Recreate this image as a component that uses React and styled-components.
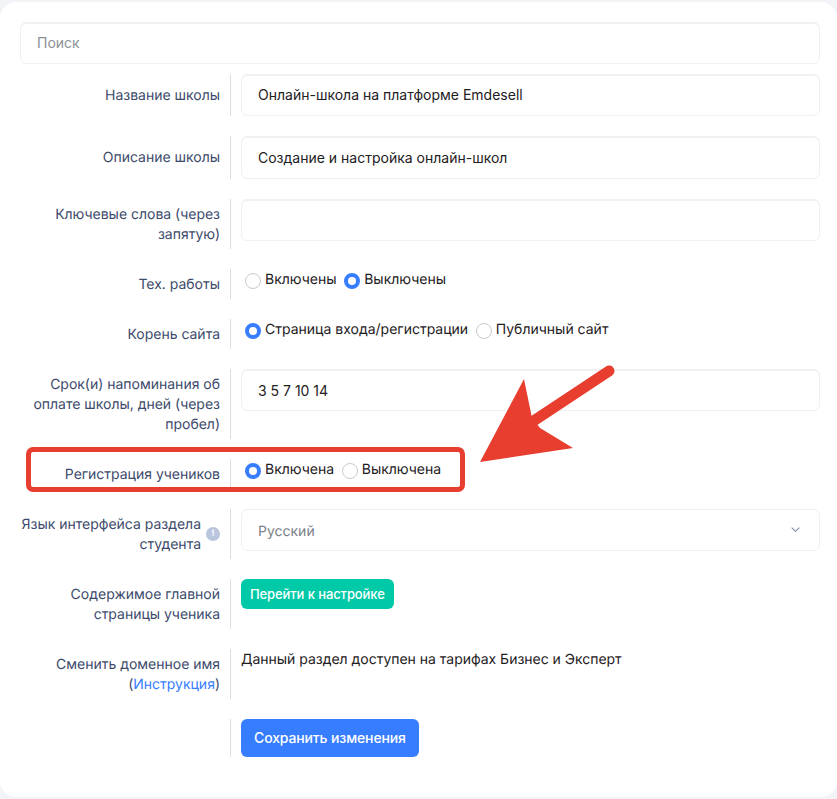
import React from "react";
import styled, { createGlobalStyle } from "styled-components";

const Global = createGlobalStyle`
  html, body { margin: 0; padding: 0; background: #f3f4f8; }
  body {
    font-family: Inter, "Liberation Sans", sans-serif;
    font-size: 14px;
    color: #1e2022;
    text-rendering: geometricPrecision;
  }
  * { box-sizing: border-box; }
`;

const Page = styled.div`
  position: relative;
  padding-top: 1.5px;
  height: 799px;
  overflow: hidden;
`;

const Card = styled.div`
  background: #fff;
  border-radius: 16px;
  padding: 20px 17px 40px 20px;
  display: flex;
  flex-direction: column;
  gap: 20px;
`;

const Search = styled.input`
  display: block;
  width: 100%;
  height: 42.4px;
  margin-bottom: -10px;
  padding: 0 16px;
  font: inherit;
  color: #1e2022;
  background: #fff;
  border: 1px solid #eff0f4;
  box-shadow: inset 0 1px 0 #f0f0f3;
  border-radius: 6px;
  outline: none;
  &::placeholder { color: #8c9095; opacity: 1; }
`;

const Row = styled.div`
  display: grid;
  grid-template-columns: 211px 1fr;
`;

const Label = styled.div`
  display: flex;
  align-items: center;
  justify-content: flex-end;
  gap: 5px;
  width: 211px;
  padding: 6px 10px 4px 0;
  border-right: 1px solid #dcdee2;
  text-align: right;
  line-height: 20px;
  letter-spacing: -0.012px;
  color: #3c4a6b;
`;

const LabelText = styled.div`
  flex: 0 1 auto;
`;

const Content = styled.div`
  padding-left: 10px;
  min-width: 0;
`;

const Field = styled.input`
  display: block;
  width: 100%;
  height: 42.4px;
  padding: ${(p) => (p.$nudge > 0 ? "1.5px" : "0")} 16px ${(p) => (p.$nudge < 0 ? "1.5px" : "0")};
  font: inherit;
  color: #1e2022;
  background: #fff;
  border: 1px solid #eff0f4;
  box-shadow: inset 0 1px 0 #f0f0f3;
  border-radius: 6px;
  outline: none;
`;

const SelectBox = styled.div`
  display: flex;
  align-items: center;
  justify-content: space-between;
  height: 42.4px;
  padding: 0 19px 0 16px;
  color: #7a8087;
  border: 1px solid #eff0f4;
  border-radius: 6px;
`;

const SelectValue = styled.span`
  padding-top: 3px;
`;

const Radios = styled.div`
  display: flex;
  align-items: flex-start;
  height: 30px;
  line-height: 20px;
`;

const RadioItem = styled.div`
  display: flex;
  align-items: flex-start;
  margin-right: 3.6px;
`;

const RadioDot = styled.span`
  flex: none;
  width: 16px;
  height: 16px;
  margin: 4px 4px 0 4px;
  border-radius: 50%;
  background: #fff;
  border: ${(p) => (p.$on ? "4px solid #377dff" : "1px solid #c9cbd0")};
`;

const RadioText = styled.span`
  padding-top: 1px;
`;

const Plain = styled.div`
  padding-top: 1px;
  line-height: 20px;
  letter-spacing: -0.02px;
  color: #1e2022;
`;

const Link = styled.a`
  color: #377dff;
  text-decoration: none;
`;

const InfoBadge = styled.span`
  flex: none;
  width: 14px;
  height: 14px;
  margin-top: -2px;
  border-radius: 50%;
  background: #bac5de;
  color: #fff;
  font-size: 9px;
  font-weight: 700;
  line-height: 14px;
  text-align: center;
`;

const GreenButton = styled.button`
  display: block;
  height: 30px;
  padding: 1px 9px 0;
  border: 0;
  border-radius: 6px;
  background: #00c9a7;
  color: #fff;
  font: 500 13px Inter, sans-serif;
  letter-spacing: -0.1px;
`;

const BlueButton = styled.button`
  display: block;
  height: 38px;
  padding: 0 13px;
  border: 0;
  border-radius: 6px;
  background: #377dff;
  color: #fff;
  font: 500 14px Inter, sans-serif;
  letter-spacing: -0.14px;
`;

const Highlight = styled.div`
  position: absolute;
  left: 26px;
  top: 447px;
  width: 439px;
  height: 45px;
  border: 5px solid #e83e30;
  border-radius: 7px;
  pointer-events: none;
`;

const ArrowSvg = styled.svg`
  position: absolute;
  left: 470px;
  top: 355px;
  pointer-events: none;
`;

const Radio = ({ on, children }) => (
  <RadioItem>
    <RadioDot $on={on} />
    <RadioText>{children}</RadioText>
  </RadioItem>
);

export default function App() {
  return (
    <Page>
      <Global />
      <Card>
        <Search placeholder="Поиск" readOnly />
        <Row>
          <Label>Название школы</Label>
          <Content><Field $nudge={-1} readOnly value="Онлайн-школа на платформе Emdesell" /></Content>
        </Row>
        <Row>
          <Label>Описание школы</Label>
          <Content><Field readOnly value="Создание и настройка онлайн-школ" /></Content>
        </Row>
        <Row>
          <Label>Ключевые слова (через запятую)</Label>
          <Content><Field readOnly value="" /></Content>
        </Row>
        <Row>
          <Label>Тех. работы</Label>
          <Content>
            <Radios>
              <Radio>Включены</Radio>
              <Radio on>Выключены</Radio>
            </Radios>
          </Content>
        </Row>
        <Row>
          <Label>Корень сайта</Label>
          <Content>
            <Radios>
              <Radio on>Страница входа/регистрации</Radio>
              <Radio>Публичный сайт</Radio>
            </Radios>
          </Content>
        </Row>
        <Row>
          <Label>Срок(и) напоминания об оплате школы, дней (через пробел)</Label>
          <Content><Field $nudge={1} readOnly value="3 5 7 10 14" /></Content>
        </Row>
        <Row>
          <Label>Регистрация учеников</Label>
          <Content>
            <Radios>
              <Radio on>Включена</Radio>
              <Radio>Выключена</Radio>
            </Radios>
          </Content>
        </Row>
        <Row>
          <Label>
            <LabelText>Язык интерфейса раздела студента</LabelText>
            <InfoBadge>!</InfoBadge>
          </Label>
          <Content>
            <SelectBox>
              <SelectValue>Русский</SelectValue>
              <svg width="9" height="5" viewBox="0 0 9 5" fill="none">
                <path d="M.7.7l3.8 3.6L8.3.7" stroke="#7d8ba8" strokeWidth="1.1" />
              </svg>
            </SelectBox>
          </Content>
        </Row>
        <Row>
          <Label>Содержимое главной страницы ученика</Label>
          <Content><GreenButton>Перейти к настройке</GreenButton></Content>
        </Row>
        <Row>
          <Label><LabelText>Сменить доменное имя (<Link>Инструкция</Link>)</LabelText></Label>
          <Content><Plain>Данный раздел доступен на тарифах Бизнес и Эксперт</Plain></Content>
        </Row>
        <Row>
          <Label />
          <Content><BlueButton>Сохранить изменения</BlueButton></Content>
        </Row>
      </Card>
      <Highlight />
      <ArrowSvg width="160" height="120" viewBox="470 355 160 120">
        <path d="M609 371L535 420" stroke="#e83e30" strokeWidth="11" strokeLinecap="round" />
        <path d="M480 462L524 379L532 418L540 428L573 448Z" fill="#e83e30" />
      </ArrowSvg>
    </Page>
  );
}
